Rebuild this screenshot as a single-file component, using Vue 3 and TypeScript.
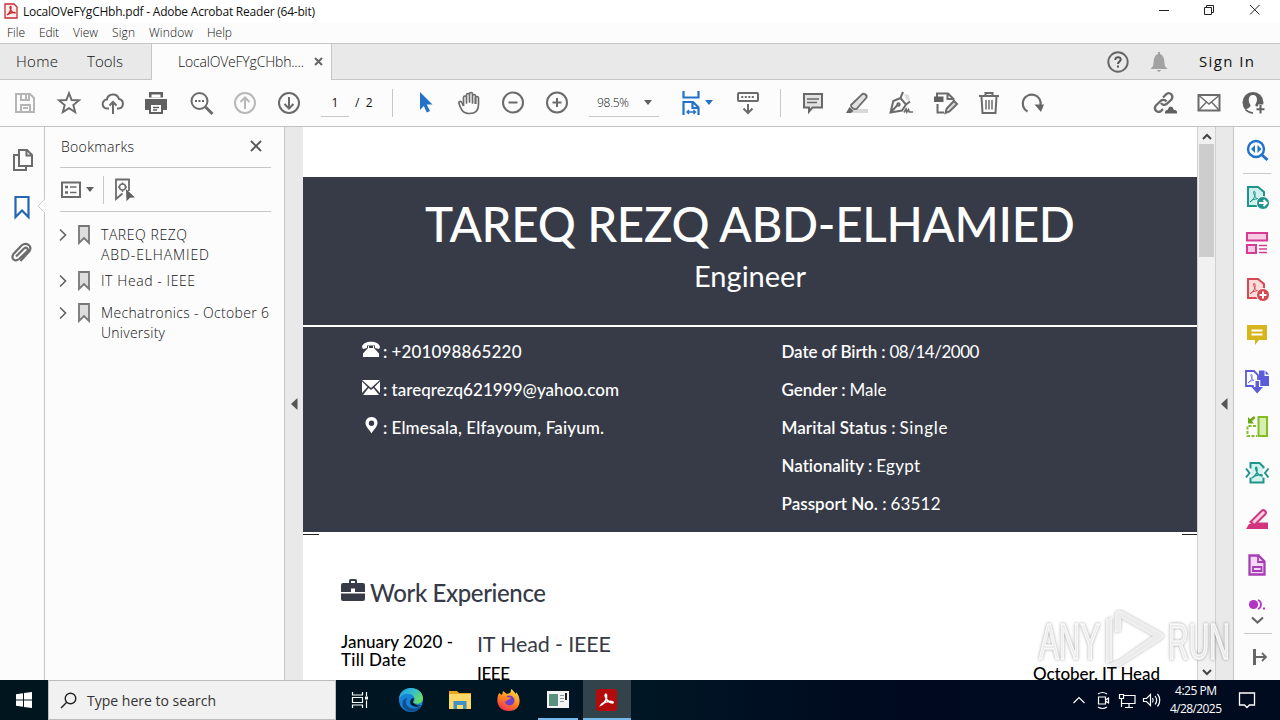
<script setup lang="ts">
import type { Directive } from 'vue'

// Tracks a text run out (or in) so that it spans the given width.
const vFit: Directive<HTMLElement, number> = {
  mounted(el, { value }) {
    const n = (el.textContent ?? '').length
    if (n < 2) return
    const natural = el.getBoundingClientRect().width
    const gap = (value - natural) / (n - 1)
    el.style.letterSpacing = gap + 'px'
    el.style.marginRight = -gap + 'px'
  },
}

const g = (body: string, w = 2) =>
  `<g fill="none" stroke="#6b6b6b" stroke-width="${w}">${body}</g>`

const acro = 'M-5 5C-2 3 1-1 0-5c-1-2-2 0-1 2C0 1 3 3 5 3c1-1-1-2-4-1-3 0-5 2-6 3z'

const icons: Record<string, string> = {
  save: '<g fill="none" stroke="#b5b5b5" stroke-width="2"><path d="M5 5h14l4 4v14H5z"/><path d="M10 5v6h8V5M15 6v4M10 23v-7h9v7M12 19h5"/></g>',
  star: g('<path stroke-width="1.9" d="M14 4.200l2.600 6.800 7.400.400-5.700 4.600 1.900 7.100-6.200-4-6.200 4 1.900-7.100L4 11.400l7.400-.4z"/>'),
  cloud: g('<path d="M10 19.500H8.500a4.500 4.500 0 01-.7-9 6.300 6.300 0 0112.200-.5 4.800 4.800 0 01-.5 9.500H18M14 25V13M10.500 16.500L14 13l3.500 3.500"/>'),
  print: '<path fill="#606060" d="M6 3h14v5.500H6zM2 10h22v11h-4v-5H6v5H2z"/><path fill="#fff" d="M8.500 5.500h9v3h-9z"/><path fill="#fff" stroke="#606060" stroke-width="2" d="M7 15h12v9H7z"/><path stroke="#606060" stroke-width="1.300" d="M10 18.500h6M10 21h4"/>',
  zoomdots: g('<circle cx="12.500" cy="12" r="8"/><path stroke-width="3" d="M18.500 18l7 7"/>') + '<path fill="#666" d="M8 11h2v2H8zM11.500 11h2v2h-2zM15 11h2v2h-2z"/>',
  up: '<g fill="none" stroke="#b8b8b8" stroke-width="2"><circle cx="14" cy="14" r="10"/><path d="M14 20V9M9.500 13L14 8.500l4.500 4.500"/></g>',
  down: g('<circle cx="14" cy="14" r="10"/><path d="M14 8v11M9.500 15l4.500 4.500 4.500-4.500"/>'),
  cursor: '<path fill="#2172c8" d="M9 3l12.500 12.500h-5.800l3.300 6.500-3.200 1.500-3-6.500-3.800 4z"/>',
  hand: g('<path stroke-linejoin="round" d="M8.500 17V8.500c0-2 3-2 3 0V14 6c0-2 3-2 3 0v7-8c0-2 3-2 3 0v9-7c0-2 3-2 3 0v8"/><path stroke-linejoin="round" d="M8.500 17L6.800 13.500c-.8-1.800-3.500-1-2.800 1 1.500 4.500 3 10 10.500 10 6.500 0 9-3.500 9-9V9c0-2-3-2-3 0v6"/>', 1.700),
  minus: g('<circle cx="14" cy="13.500" r="10"/><path d="M9.500 13.500h9"/>'),
  plus: g('<circle cx="14" cy="13.500" r="10"/><path d="M9.500 13.500h9M14 9v9"/>'),
  fit: '<g fill="none" stroke="#2172c8" stroke-width="2.200"><path d="M6.500 2v6.500h15V2M6.500 26V13h9.500l5.500 5.500V26M15.500 13v6H21"/><path stroke-width="1.400" d="M10 23h8.500M12 21l-2 2 2 2M16.500 21l2 2-2 2"/></g>',
  keypad: g('<rect x="4" y="4" width="20" height="8" rx="1"/><path stroke-dasharray="2 1.500" d="M7.300 8H21"/><path d="M14 15v9M9.500 19.500L14 24l4.500-4.500"/>'),
  comment: '<path fill="#e2e2e2" stroke="#686868" stroke-width="2" d="M5 5h18v13.500h-9.500L10 22.500v-4H5z"/><path stroke="#686868" stroke-width="1.300" d="M8 10h12M8 13.500h10"/>',
  marker: '<path fill="#d8d8d8" d="M11 20h14v4H8z"/><path fill="#e0e0e0" stroke="#6b6b6b" stroke-width="1.800" d="M8 16L19 5.500c1.500-1.700 5.500.3 4.500 3L13.500 20c-3 .8-5.800-1.200-5.500-4z"/><path fill="#666" d="M6.500 18l4 4L8 24H3z"/>',
  pen: '<path fill="#ddd" d="M17 5l5 1 1 6-4-1z"/>' + g('<path d="M3.500 23.500L6.300 12l7.200-3 5.500 6.500-4 6zM3.500 23.500l7-7.500M16 3l-2.500 6M19 15.500l4-3"/><circle cx="11.500" cy="15.500" r="1.200"/><path stroke-width="1.600" d="M17 23.500l2-3.500.800 3 1.700-2.500.800 2.500H26"/>', 2),
  formpen: g('<path d="M6.500 15v8.500H13M12 4.500h5l5.500 5.500v1.500M16.500 5v5H22M6 8V4.500h7"/><path fill="#ddd" d="M14.500 24l1.200-4.500L23 12l3 3-7.500 7.500z"/>') + '<path fill="#606060" d="M3 7.500h9.500V13H3z"/>',
  trash: g('<path d="M4 7h20M10.500 7V4h7v3M6.500 7.500l1 16.500h13l1-16.500"/><path stroke-width="1.500" d="M11 11v9.500M14 11v9.500M17 11v9.500"/>'),
  rotate: g('<path stroke-width="2.200" d="M8.500 22.500a9 9 0 1113-6"/>') + '<path fill="#666" d="M15.500 15.500H25l-3 7.500z"/>',
  link: '<g fill="none" stroke="#6b6b6b" stroke-width="2.300"><path d="M12 8.500L15.500 5c3.500-2.500 7.500 1.500 5 5.500l-5 4.500c-2 1.500-4.500 1-5.500-1M15.500 12.500c-1.500-2-4-2-6-.5l-5 5c-2 4 2 7.500 5.500 5l2-2"/></g><path stroke="#fff" fill="#606060" d="M13.500 25c-.5-3 1-4.500 3-4.500.5-4.500 6-4.500 6.500 0 3 0 4 1.500 3.500 4.500z"/>',
  mail: g('<path d="M3.500 6h21v15.500h-21z"/><path stroke-width="1.400" d="M4 6.500l10 8.500 10-8.500M4 21l7.500-8M24 21l-7.500-8"/>'),
  user: '<circle cx="14" cy="13.500" r="10.500" fill="#606060"/><path fill="#fcfcfc" d="M14 6c5 0 4.800 6.500 2.300 9.500 0 2.500 2 2.500 3.700 3.500l-1 5h-7c-2.500-.5-4-1.500-5.500-3 2-2 5-2 5-5C8.800 12.500 9 6 14 6z"/><path fill="none" stroke="#606060" stroke-width="1.500" d="M6.500 20.500c2 2 4 3.500 7.500 3.500"/><path stroke="#fcfcfc" stroke-width="5" d="M21.500 15.500v10M16.500 20h10"/><path stroke="#606060" stroke-width="2" d="M21.500 16v8.500M17.500 20.200h8"/>',
  pages: g('<path d="M9.500 9H5v15h12v-3.500M10 4h8l5 5v11H10zM17.500 4.500v5H23"/>'),
  mark: '<path fill="none" stroke="#2466b0" stroke-width="2.200" d="M6.500 5h13v20L13 18.500 6.500 25z"/>',
  clip: g('<path stroke-width="2.200" d="M7 18.500l8-8c2.500-2 5 .500 3 3L10 21c-4 3.500-8.500-.5-5.500-5l8-8.500c5-4 11 .5 8 5.500l-9 10"/>'),
  search: '<g fill="none" stroke="#2172c8"><circle cx="13" cy="13" r="8" stroke-width="2.400"/><path stroke-width="3" d="M19 19l5.500 5"/></g><path fill="#2172c8" d="M12 9v8l-4-4zM14.500 9v8l4-4z"/>',
  export: `<path fill="#d0f0ed" stroke="#20948b" stroke-width="2" d="M5 4h10l6 5v14H5z"/><path transform="translate(12 14)" fill="none" stroke="#20948b" d="${acro}"/><circle cx="20" cy="20" r="6.500" fill="#20948b" stroke="#fff"/><path fill="none" stroke="#fff" stroke-width="2" d="M16 20h7M20.500 17l3 3-3 3"/>`,
  organize: '<g fill="#f9cbe5" stroke="#d63c94" stroke-width="2"><path d="M4 4h20v7.500H4zM4 16h9v8H4z"/></g><path stroke="#d63c94" stroke-width="1.400" d="M16 16.500h8M16 20h8M16 23.500h8"/>',
  create: `<path fill="#fcdcda" stroke="#d44851" stroke-width="2" d="M5 4h10l6 5v14H5z"/><path transform="translate(12 14)" fill="none" stroke="#d44851" d="${acro}"/><circle cx="20" cy="20" r="6.500" fill="#d44851" stroke="#fff"/><path stroke="#fff" stroke-width="2" d="M16.500 20h7M20 16.500v7"/>`,
  note: '<path fill="#d7b51c" d="M4 4h20v15h-8l-4 5v-5H4z"/><path stroke="#fff" stroke-width="1.800" d="M8.500 9.500h11M8.500 13.500h11"/>',
  combine: `<path fill="#5b5bdc" d="M16 3.500h5.500V9H26v10H16z"/><path fill="#5b5bdc" d="M22.500 3.500L26 7.500h-3.500z"/><path fill="#fff" stroke="#5b5bdc" stroke-width="1.800" d="M3 4h8l4 4v11H3z"/><path transform="translate(9 12) scale(.8)" fill="none" stroke="#5b5bdc" d="${acro}"/><path stroke="#fcfcfc" stroke-width="6.500" d="M14 13v10"/><path fill="#5b5bdc" d="M12.500 14h3.500v6h4l-5.800 6.500L8.500 20h4z"/>`,
  compress: '<path fill="#d6efb0" stroke="#83bd22" stroke-width="2" d="M15.500 4H24v19h-8.500z"/><path fill="none" stroke="#83bd22" stroke-width="2" stroke-dasharray="3 1.500" d="M13 13H4.500v10H14"/><path fill="#6da818" d="M5 4l2 2 4-3 1.500 2L9 8l2 2.500H5z"/>',
  optimize: `<path fill="#d2f3f0" stroke="#20948b" stroke-width="2" d="M7.500 9V4h9l4 4v15.500h-13z"/><path stroke="#fcfcfc" stroke-width="4" d="M6.800 9.500v9M21.200 9.500v9"/><path transform="translate(14 14)" fill="none" stroke="#20948b" stroke-width="1.300" d="${acro}"/><path fill="none" stroke="#20948b" stroke-width="2" d="M3 9.500L6.500 14 3 18.500M25.500 9.500L22 14l3.500 4.500"/>`,
  redact: '<path fill="#d3347f" d="M13 17.500h12V24H3l3-5z"/><path fill="#fbd4e4" stroke="#d3347f" stroke-width="2" d="M7.500 17L19 5.500c2-1.500 5 1.500 3.500 3.500L11.500 20z"/>',
  doc: '<path fill="#f3d7f6" stroke="#a63fb4" stroke-width="2.300" d="M6.500 4.500h9l6 6V23.500h-15z"/><path fill="none" stroke="#a63fb4" stroke-width="1.800" d="M15 5v6h6M10 16h8.500v4H10z"/>',
  panel: g('<path d="M5 6.500h18v14.500H5z"/><path stroke-width="2.600" d="M8 11h3M8 16.500h3"/><path stroke-width="1.700" d="M13 11h6.500M13 16.500h6.500"/>'),
  findmark: g('<path stroke-width="1.800" d="M19 15V3.500H6V23l6.500-5.500"/><circle cx="12.500" cy="11" r="3"/><path stroke-width="1.300" d="M12.500 6.500v2M12.500 14v2M8 11h2M15 11h2"/>', 1.500) + '<path fill="#606060" d="M16 13l9 8.500-5 .300-3.500 3.500z"/>',
}

const fileTools = ['save', 'star', 'cloud', 'print', 'zoomdots', 'up', 'down']
const viewTools = ['cursor', 'hand', 'minus', 'plus']
const editTools = ['comment', 'marker', 'pen', 'formpen', 'trash', 'rotate']
const shareTools = ['link', 'mail', 'user']
const sideTools = ['export', 'organize', 'create', 'note', 'combine', 'compress', 'optimize', 'redact', 'doc']

const menus: [string, number][] = [
  ['File', 18], ['Edit', 20], ['View', 25], ['Sign', 23], ['Window', 44], ['Help', 25],
]
const bookmarks: [string, number][][] = [
  [['TAREQ REZQ', 86], ['ABD-ELHAMIED', 108]],
  [['IT Head - IEEE', 94]],
  [['Mechatronics - October 6', 168], ['University', 64]],
]
const facts: [string, string, number, number][] = [
  ['Date of Birth :', '08/14/2000', 104, 90],
  ['Gender :', 'Male', 64, 37],
  ['Marital Status :', 'Single', 114, 48],
  ['Nationality :', 'Egypt', 91, 44],
  ['Passport No. :', '63512', 105, 50],
]
const contacts: [string, string, number][] = [
  ['<path fill="#fff" d="M0 6C1-1 17-1 18 6l-1 2-4-1V4.500H5V7L1 8zM6 5h1v2h4V5h1v2l5 5.500V16H1v-3.500L6 7z"/>', '+201098865220', 130],
  ['<path fill="#fff" d="M0 1h18L9 9zM0 2.500L5.500 8 0 14zM18 2.500L12.500 8l5.500 6zM6.500 9L9 11l2.500-2 5.500 7H1z"/>', 'tareqrezq621999@yahoo.com', 227.5],
  ['<path fill="#fff" fill-rule="evenodd" d="M9.500 0c4 0 6 3 6 6 0 4-4.500 7-6 10.500C8 13 3.500 10 3.500 6c0-3 2-6 6-6zm0 3.500a2.700 2.700 0 100 5.400 2.700 2.700 0 000-5.400z"/>', 'Elmesala, Elfayoum, Faiyum.', 212.5],
]
</script>

<template>
  <div class="screen">
    <header class="titlebar">
      <svg class="app-icon" width="14" height="16" viewBox="0 0 14 16"><path fill="#fff0ef" stroke="#c62b32" stroke-width="1.300" d="M1 1h9l3 3v11H1z" /><path fill="none" stroke="#c62b32" stroke-width="1.300" d="M3 12c3-2 4-5 4-8 0-1-1-1-1 1 1 3 3 5 5 5 1-1-4-1-8 2z" /></svg>
      <span v-fit="292" class="t app-name">LocalOVeFYgCHbh.pdf - Adobe Acrobat Reader (64-bit)</span>
      <svg class="win-buttons" width="112" height="22" viewBox="0 0 112 22" fill="none" stroke="#222" stroke-width="1"><path d="M7 11.500h10M52.500 8.500h7v7h-7zM54.500 8.500v-2h7v7h-2M98 6l9.500 9.500M107.500 6L98 15.500" /></svg>
    </header>
    <nav class="menubar">
      <span v-for="m in menus" :key="m[0]" v-fit="m[1]" class="t">{{ m[0] }}</span>
    </nav>
    <div class="tabs">
      <div class="fixed-tabs"><span v-fit="42" class="t">Home</span><span v-fit="36" class="t">Tools</span></div>
      <div class="file-tab">
        <span v-fit="126" class="t">LocalOVeFYgCHbh....</span>
        <svg width="9" height="9" viewBox="0 0 9 9"><path stroke="#666" stroke-width="2" d="M1 1l7 7M8 1L1 8" /></svg>
      </div>
      <div class="account">
        <svg width="22" height="22" viewBox="0 0 22 22"><circle cx="11" cy="11" r="9.700" fill="none" stroke="#666" stroke-width="1.900" /><path fill="none" stroke="#555" stroke-width="2" d="M8.300 9c0-4 5.700-3.500 5.400-.3C13.500 10.500 11 10.500 11 13M11 14.500v2" /></svg>
        <svg class="bell" width="18" height="20" viewBox="0 0 18 20"><path fill="#a2a2a2" d="M8 0h2v2c5 1 4 9 5 12l2.500 3H.5L3 14C4 11 3 3 8 2zM6.500 18h5L9 20z" /></svg>
        <span v-fit="55" class="t sign-in">Sign In</span>
      </div>
    </div>

    <div class="toolbar">
      <span v-for="n in fileTools" :key="n" class="cell"><svg viewBox="0 0 28 28" v-html="icons[n]" /></span>
      <div class="page-no"><span class="field">1</span><span>/&nbsp; 2</span></div>
      <i class="rule" />
      <span v-for="n in viewTools" :key="n" class="cell"><svg viewBox="0 0 28 28" v-html="icons[n]" /></span>
      <div class="zoom"><span v-fit="32" class="t">98.5%</span><i class="caret" /></div>
      <span class="cell fit-cell"><svg viewBox="0 0 28 28" v-html="icons.fit" /><i class="caret blue" /></span>
      <span class="cell"><svg viewBox="0 0 28 28" v-html="icons.keypad" /></span>
      <i class="rule second" />
      <span v-for="n in editTools" :key="n" class="cell"><svg viewBox="0 0 28 28" v-html="icons[n]" /></span>
      <div class="share">
        <span v-for="n in shareTools" :key="n" class="cell"><svg viewBox="0 0 28 28" v-html="icons[n]" /></span>
      </div>
    </div>

    <main class="main">
      <aside class="rail">
        <svg v-for="n in ['pages', 'mark', 'clip']" :key="n" viewBox="0 0 28 28" v-html="icons[n]" />
        <svg class="notch" viewBox="0 0 8 14"><path fill="#fcfcfc" stroke="#cfcfcf" d="M8 0L1 7l7 7" /></svg>
      </aside>
      <aside class="bookmarks">
        <div class="bm-head">
          <span v-fit="73" class="t">Bookmarks</span>
          <svg width="12" height="12" viewBox="0 0 12 12"><path stroke="#555" stroke-width="1.800" d="M1 1l10 10M11 1L1 11" /></svg>
        </div>
        <div class="bm-tools">
          <svg viewBox="0 0 28 28" v-html="icons.panel" /><i class="caret" /><i class="bm-rule" />
          <svg viewBox="0 0 28 28" v-html="icons.findmark" />
        </div>
        <div v-for="(b, i) in bookmarks" :key="i" class="bm-item">
          <svg class="chev" viewBox="0 0 8 14"><path fill="none" stroke="#666" stroke-width="1.700" d="M1 1.500L6.500 7 1 12.500" /></svg>
          <svg class="ribbon" viewBox="0 0 14 20"><path fill="#dedede" stroke="#777" stroke-width="1.800" d="M2 1h10v17l-5-5-5 5z" /></svg>
          <div class="bm-text"><div v-for="l in b" :key="l[0]"><span v-fit="l[1]" class="t">{{ l[0] }}</span></div></div>
        </div>
      </aside>
      <div class="gutter left"><svg viewBox="0 0 7 12"><path fill="#555" d="M6.500 0v12L0 6z" /></svg></div>

      <article class="page">
        <section class="hero">
          <h1><span v-fit="650" class="t">TAREQ REZQ ABD-ELHAMIED</span></h1>
          <p><span v-fit="112" class="t">Engineer</span></p>
        </section>
        <section class="info">
          <ul class="contacts">
            <li v-for="c in contacts" :key="c[1]"><svg viewBox="0 0 18 17" v-html="c[0]" /><b>:</b><span v-fit="c[2]" class="t">{{ c[1] }}</span></li>
          </ul>
          <ul class="facts">
            <li v-for="f in facts" :key="f[0]"><b v-fit="f[2]" class="t">{{ f[0] }}</b><span v-fit="f[3]" class="t">{{ f[1] }}</span></li>
          </ul>
        </section>
        <div class="ticks"><i /><i /></div>
        <h2>
          <svg viewBox="0 0 24 22"><path fill="#373b48" d="M8 4V1.500Q8 0 10 0h4q2 0 2 1.500V4h6q2 0 2 2v7H14V9.500h-4V13H0V6q0-2 2-2zM10 2v2h4V2zM0 14.500h24V20q0 2-2 2H2q-2 0-2-2z" /></svg>
          <span v-fit="176" class="t">Work Experience</span>
        </h2>
        <section class="job">
          <div class="when"><span v-fit="112" class="t">January 2020 -</span><br><span v-fit="65" class="t">Till Date</span></div>
          <div class="what">
            <h3><span v-fit="134" class="t">IT Head - IEEE</span></h3>
            <div class="org"><span v-fit="33" class="t">IEEE</span><span v-fit="127" class="t">October, IT Head</span></div>
          </div>
        </section>
      </article>

      <div class="scrollbar">
        <svg viewBox="0 0 10 7"><path fill="none" stroke="#444" stroke-width="2" d="M1 6l4-4 4 4" /></svg>
        <i class="thumb" />
        <svg viewBox="0 0 10 7"><path fill="none" stroke="#444" stroke-width="2" d="M1 1l4 4 4-4" /></svg>
      </div>
      <div class="gutter right"><svg viewBox="0 0 7 12"><path fill="#555" d="M6.500 0v12L0 6z" /></svg></div>
      <aside class="tools">
        <div class="tool first"><svg viewBox="0 0 28 28" v-html="icons.search" /></div>
        <div v-for="n in sideTools" :key="n" class="tool"><svg viewBox="0 0 28 28" v-html="icons[n]" /></div>
        <svg class="tools-end" viewBox="0 0 46 92">
          <circle cx="19.500" cy="16.500" r="4.600" fill="#b236c3" />
          <path fill="none" stroke="#b236c3" stroke-width="1.800" d="M24 12c4 1.500 4 7.500 0 9" />
          <path fill="#b236c3" d="M29 19.500h2v2h-2z" />
          <path fill="none" stroke="#666" stroke-width="2.200" d="M18 29.500l5.500 5 5.500-5" />
          <path stroke="#c8c8c8" d="M10 45.500h28" />
          <path fill="none" stroke="#666" stroke-width="3" d="M20.500 61v16" />
          <path fill="none" stroke="#666" stroke-width="1.800" d="M22 69h10M28 65l4 4-4 4" />
        </svg>
      </aside>

      <svg class="watermark" viewBox="0 0 200 70">
        <g class="mark-shadow" stroke="#fff" stroke-opacity=".85" fill="#fff" fill-opacity=".75">
          <text x="3" y="50" font-size="50" stroke-width="1.500" textLength="61" lengthAdjust="spacingAndGlyphs">ANY</text>
          <text x="132" y="50" font-size="50" stroke-width="1.500" textLength="62" lengthAdjust="spacingAndGlyphs">RUN</text>
          <path stroke="none" fill-rule="evenodd" d="M70 10l6-2v44l-6 3zM79 4q3-4 7-2l40 22q4 3 0 6L84 57q-6 2-9-3l8-3 34-24-32-18v13l-6 2z" />
        </g>
      </svg>
    </main>

    <footer class="taskbar">
      <div class="start"><svg viewBox="0 0 16 16"><path fill="#fff" d="M0 2.200l7-1v6.300H0zM8 1l8-1v7.500H8zM0 8.500h7v6.300l-7-1zM8 8.500h8V16l-8-1z" /></svg></div>
      <div class="search">
        <svg viewBox="0 0 17 17"><circle cx="10.500" cy="6.500" r="5.300" fill="none" stroke="#222" stroke-width="1.400" /><path stroke="#222" stroke-width="1.400" d="M6.500 10.500L1 16" /></svg>
        <span v-fit="129" class="t">Type here to search</span>
      </div>
      <div class="task view"><svg viewBox="0 0 24 24"><path fill="none" stroke="#fff" stroke-width="1.200" d="M4.500 4v3h10V4M4.500 20v-3h10v3M4.500 9.500h10v5h-10zM18.500 4v4M18.500 12.500V20" /><path fill="#fff" d="M17 8.500h3v3h-3z" /></svg></div>
      <div class="task"><svg viewBox="0 0 24 24">
        <defs><linearGradient id="eg" x1="0" y1="0" x2="1" y2=".5"><stop offset="0" stop-color="#189de1" /><stop offset=".55" stop-color="#35bfd0" /><stop offset="1" stop-color="#68dc67" /></linearGradient></defs>
        <circle cx="12" cy="12" r="12" fill="#1583d7" /><path fill="url(#eg)" d="M0 11C1-4 23-3 24 10c0 5-5 7-9 5-2-1 2-2 0-6C12 4 3 5 0 11z" /><path fill="#124e91" d="M8 10c-4 8 5 14 14 8-4 7-14 8-18 1-2-5 1-9 4-9z" /><path fill="#071a29" d="M14.500 15c-2-1 1-2 0-5-2 0-4 3-3 6 2 3 7 4 11 1-3 1-6 0-8-2z" /></svg></div>
      <div class="task"><svg viewBox="0 0 24 24"><path fill="#e9a720" d="M1 3h8l2 2h12v5H1z" /><path fill="#ffd968" d="M1 6h22v15H1z" /><path fill="#3f91c6" d="M5.500 13h13v8h-3.500v-4H9v4H5.500z" /></svg></div>
      <div class="task"><svg viewBox="0 0 24 24">
        <defs><linearGradient id="fx" x1=".8" y1="0" x2=".3" y2="1"><stop offset="0" stop-color="#ffe14d" /><stop offset=".5" stop-color="#ff8a1e" /><stop offset="1" stop-color="#f02f52" /></linearGradient></defs>
        <path fill="url(#fx)" d="M2 5l3 2 1-4 4 3c2-1 4 0 4-5 2 1 4 4 5 5v-2c6 6 5 19-7 19C1 23-2 13 2 5z" /><circle cx="12.500" cy="12.500" r="5" fill="#7240c8" /><path fill="#ff8120" d="M5 10c3-3 6-1 9 0-1 2-5 1-5 4z" /></svg></div>
      <div class="task open"><svg viewBox="0 0 24 24"><path fill="#f3f3f3" d="M1 3h22v17H1z" /><path fill="#5b8f80" d="M3 6h9v12H3z" /><path stroke="#8a9a9a" d="M14 7.500h4M14 10.500h4M14 13.500h4" /><path fill="#222" d="M19 5h2v7h-2z" /></svg></div>
      <div class="task open current"><svg viewBox="0 0 24 24"><rect x="1" y="1" width="21" height="22" rx="3" fill="#b30b0b" /><path fill="none" stroke="#fff" stroke-width="1.600" d="M6 17c4-2 6-6 5.500-10-.5-2-2 0-1 2 1 3 4 6 7 6 2-1-1-2-4-1.500S7 15 6 17z" /></svg></div>
      <div class="tray">
        <svg viewBox="0 0 90 24" fill="none" stroke="#fff" stroke-width="1.200">
          <path d="M1.500 15L7 9.500l5.500 5.500M26.500 9h7v7h-7zM33.500 12l3-2v5l-3-2M26 6c3-2 6-2 9 0M26 19c3 2 6 2 9 0" />
          <path d="M51 7.500h12v8H50M57 16v3M53 19.500h8M47.500 6.500h4v4h-4zM49.500 10.500V19" />
          <path d="M71.500 10.500h3l4-4v11l-4-4h-3zM80.500 10c1 1.500 1 3 0 4.500M83 8c2 2.500 2 6 0 8.500M85.500 6c3 3.500 3 9 0 12.500" />
        </svg>
        <div class="clock"><span v-fit="42" class="t">4:25 PM</span><span v-fit="52" class="t">4/28/2025</span></div>
        <svg class="notice" viewBox="0 0 18 18"><path fill="none" stroke="#fff" stroke-width="1.300" d="M1.500 2h15v12h-5L9 16.500 6.500 14h-5z" /></svg>
      </div>
    </footer>
  </div>
</template>

<style>
body { overflow: hidden; }
</style>
<style scoped>
* { box-sizing: border-box; }
.screen { width: 1280px; height: 720px; display: flex; flex-direction: column; overflow: hidden; background: #fcfcfc; color: #111; font-family: "Open Sans", "Noto Sans", sans-serif; font-size: 14px; font-weight: 300; }
.screen svg { display: block; flex: none; }
.t { display: inline-block; white-space: nowrap; flex: none; }
.titlebar { height: 23px; background: #fff; display: flex; align-items: center; padding-left: 4px; font-size: 12px; font-weight: 400; flex: none; }
.app-icon { margin: -2px 5px 0 0; }
.app-name { height: 23px; line-height: 23px; }
.win-buttons { margin: -3px 16px 0 auto; }
.menubar { height: 20px; display: flex; gap: 14px; padding-left: 7px; font-size: 12px; line-height: 19px; flex: none; }
.tabs { height: 37px; border-top: 1px solid #c6c6c6; border-bottom: 1px solid #c6c6c6; background: #e9e9e9; display: flex; flex: none; font-size: 15px; line-height: 35px; }
.fixed-tabs { width: 152px; border-right: 1px solid #c6c6c6; display: flex; padding-left: 16px; gap: 29px; }
.file-tab { width: 180px; height: 36px; background: #fcfcfc; border-right: 1px solid #c6c6c6; padding: 0 0 1px 26px; display: flex; align-items: center; gap: 10px; font-size: 14px; }
.account { margin-left: auto; padding-right: 26px; display: flex; align-items: center; }
.bell { margin: 0 31px 0 21px; }
.sign-in { font-weight: 400; }
.toolbar { height: 47px; border-bottom: 1px solid #c2c2c2; display: flex; align-items: center; padding: 0 5px 0 3px; flex: none; font-size: 12px; }
.cell { width: 44px; height: 28px; display: flex; justify-content: center; flex: none; }
.cell svg { width: 28px; height: 28px; }
.page-no { width: 81px; padding-left: 10px; display: flex; gap: 6px; line-height: 28px; font-weight: 400; }
.field { width: 28px; height: 28px; text-align: center; border-bottom: 1px solid #c8c8c8; }
.rule { width: 1px; height: 28px; background: #c8c8c8; margin-right: 10px; }
.second { margin: 0 10px; }
.zoom { width: 70px; height: 28px; margin: 0 10px; padding-left: 8px; border-bottom: 1px solid #c8c8c8; line-height: 27px; display: flex; align-items: center; gap: 15px; }
.caret { width: 0; height: 0; border: 4px solid transparent; border-top: 5px solid #606060; border-bottom: 0; flex: none; }
.fit-cell { position: relative; margin-right: 13px; }
.blue { position: absolute; right: 0; top: 11px; border-top-color: #2172c8; }
.share { margin-left: auto; display: flex; }
.main { height: 553px; flex: none; display: flex; position: relative; overflow: hidden; }
.rail { width: 45px; border-right: 1px solid #c6c6c6; padding: 19px 0 0 9px; position: relative; display: flex; flex-direction: column; gap: 18px; }
.rail svg { width: 28px; height: 28px; }
.rail .notch { position: absolute; right: -1px; top: 72px; width: 8px; height: 14px; }
.bookmarks { width: 240px; border-right: 1px solid #c6c6c6; padding: 0 13px 0 16px; }
.bm-head { height: 41px; border-bottom: 1px solid #c6c6c6; display: flex; align-items: center; justify-content: space-between; padding: 0 9px 2px 1px; margin-left: -1px; }
.bm-tools { height: 44px; border-bottom: 1px solid #c6c6c6; display: flex; align-items: center; margin: 0 0 13px -1px; }
.bm-tools svg { width: 28px; height: 28px; margin-left: -3px; }
.bm-rule { width: 1px; height: 28px; background: #c8c8c8; margin: 0 9px 0 10px; }
.bm-tools .caret { margin-left: 1px; margin-right: -1px; }
.bm-item { display: flex; margin-bottom: 6px; line-height: 20px; }
.bm-item:nth-child(4) { margin-bottom: 12px; }
.chev { width: 8px; height: 14px; margin: 3px 9px 0 -2px; }
.ribbon { width: 14px; height: 20px; margin: 0 10px 0 1px; }
.bm-text div { height: 20px; }
.gutter { width: 18px; background: #e9e9e9; display: flex; align-items: center; justify-content: center; }
.gutter svg { width: 7px; height: 12px; }
.page { width: 894px; background: #fff; color: #000; font-family: Lato, "Open Sans", sans-serif; font-size: 17px; font-weight: 500; padding-top: 50px; overflow: hidden; }
.hero { height: 150px; background: #373b48; border-bottom: 2px solid #fff; color: #fff; text-align: center; padding-top: 14px; }
.hero h1 { margin: 0; font-size: 47.500px; line-height: 66px; font-weight: 500; }
.hero p { margin: 0; font-size: 29px; line-height: 38px; font-weight: 400; }
.info { height: 205px; background: #373b48; color: #fff; display: flex; padding: 5px 0 0 59px; }
.info ul { list-style: none; margin: 0; padding: 0; width: 420px; }
.info li { height: 38px; line-height: 39px; display: flex; }
.info b { font-weight: 600; }
.contacts svg { width: 18px; height: 17px; margin: 9px 3px 0 0; }
.contacts b { width: 8.500px; }
.info .facts { padding-left: 2px; }
.facts li { gap: 4px; }
.facts span { font-weight: 400; }
.ticks { display: flex; justify-content: space-between; padding-top: 2px; }
.ticks i { width: 16px; height: 1px; background: #222; }
.ticks i:last-child { width: 15px; }
.page h2 { margin: 42px 0 0 38px; height: 34px; display: flex; gap: 5px; font-size: 24px; line-height: 31px; font-weight: 500; color: #373b48; }
.page h2 svg { width: 24px; height: 22px; margin-top: 2px; }
.job { display: flex; margin: 19px 37px 0 38px; }
.when { width: 136px; line-height: 18px; padding-top: 3px; }
.when .t { vertical-align: top; }
.what { flex: 1; }
.what h3 { margin: 0; font-size: 21.500px; line-height: 28px; font-weight: 400; color: #373b48; }
.org { display: flex; justify-content: space-between; line-height: 31px; }
.scrollbar { width: 19px; background: #f1f1f1; border: 1px solid #d0d0d0; border-width: 0 1px; display: flex; flex-direction: column; align-items: center; padding: 6px 0 4px; }
.scrollbar svg { width: 10px; height: 7px; }
.thumb { width: 15px; height: 113px; background: #cdcdcd; margin: 4px 0 auto; }
.right { border-right: 1px solid #c6c6c6; }
.tools { width: 46px; }
.tool { height: 46px; display: flex; align-items: center; justify-content: center; }
.tool svg { width: 28px; height: 28px; }
.first { height: 47px; border-bottom: 1px solid #c8c8c8; margin: 0 9px; }
.tools-end { width: 46px; height: 92px; }
.watermark { position: absolute; left: 1036px; top: 482px; width: 200px; height: 70px; font-family: "Liberation Sans", sans-serif; }
.mark-shadow { filter: drop-shadow(0 0 1.500px rgba(80, 80, 80, .6)); }
.taskbar { height: 40px; background: linear-gradient(90deg, #00151d, #001625 50%, #00091f 70%, #000b20); color: #fff; display: flex; flex: none; font-weight: 400; }
.start { width: 48px; display: flex; align-items: center; justify-content: center; }
.start svg { width: 16px; height: 16px; }
.search { width: 288px; background: #f1f1f1; border: 1px solid #bdbdbd; color: #333; display: flex; align-items: center; padding-left: 11px; gap: 10px; }
.search svg { width: 17px; height: 17px; }
.task { width: 49px; height: 40px; display: flex; align-items: center; justify-content: center; }
.task svg { width: 24px; height: 24px; }
.view { width: 50px; padding-right: 2px; }
.open { border-bottom: 2px solid #76b9ed; width: 40px; padding-top: 2px; margin: 0 4px 0 5px; }
.current { width: 48px; background: #33434c; margin: 0 1px; }
.tray { margin-left: auto; display: flex; align-items: center; padding-right: 24px; }
.tray svg { width: 90px; height: 24px; }
.clock { width: 68px; margin-right: 8px; display: flex; flex-direction: column; align-items: center; font-size: 12px; line-height: 18px; }
.tray .notice { width: 18px; height: 18px; }
</style>
